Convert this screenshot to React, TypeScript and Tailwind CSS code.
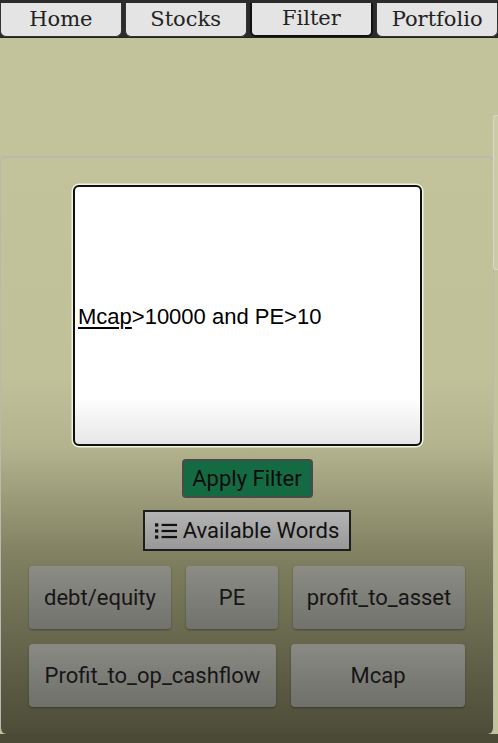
import React from 'react';

const tabs = ['Home', 'Stocks', 'Filter', 'Portfolio'];

const WordButton: React.FC<{ label: string; className: string }> = ({ label, className }) => (
  <button
    className={`h-[63px] rounded-[4px] bg-gradient-to-b from-[#8e8e8a]/90 to-[#737370]/90 shadow-[0_1px_2px_rgba(0,0,0,0.35)] text-[22px] text-[#161616] font-['Roboto',sans-serif] ${className}`}
  >
    {label}
  </button>
);

export default function App() {
  return (
    <div className="w-[498px] h-[743px] overflow-hidden relative bg-[#c2c39b] font-['Roboto',sans-serif]">
      {/* Tab bar */}
      <div className="h-[38px] bg-[#2b2b2b] pt-[3px] border-b border-[#222]">
        <div className="flex gap-[3px] h-[34px]">
          {tabs.map((t) => (
            <div
              key={t}
              className={`flex-1 flex items-center justify-center bg-[#e4e4e4] rounded-b-[6px] text-[21px] text-[#222] font-['DejaVu_Serif',serif] ${
                t === 'Filter' ? 'border-2 border-t-0 border-[#111]' : 'border border-t-0 border-[#333]'
              }`}
            >
              {t}
            </div>
          ))}
        </div>
      </div>

      {/* Scrollbar */}
      <div className="absolute right-0 top-[115px] w-[5px] h-[155px] rounded-l-[3px] border border-r-0 border-[#d8d8c4] bg-[#cacaa6]" />

      {/* Panel */}
      <div className="mt-[118px] mr-[4px] h-[578px] rounded-[6px] border-t-2 border-l border-r border-[#b9b9b0] bg-[linear-gradient(to_bottom,#c2c39b_0%,#c0c199_38%,#b3b38e_50%,#7e7e60_70%,#4c4c38_100%)] flex flex-col items-center pt-[27px]">
        <div className="w-[349px] ml-[1px] h-[261px] rounded-[6px] border-2 border-[#111] shadow-[0_0_0_1.5px_#f2f2e0] bg-[linear-gradient(to_bottom,#ffffff_0%,#ffffff_82%,#e6e6e6_100%)] flex items-center px-[3px]">
          <span className="text-[22px] text-black font-['Liberation_Sans',sans-serif] mt-[1px]">
            <span className="underline decoration-2 underline-offset-[3px]">Mcap</span>&gt;10000 and PE&gt;10
          </span>
        </div>

        <button className="mt-[13px] w-[131px] h-[39px] rounded-[4px] border-2 border-[#4a4a4a] bg-[#146b43] text-[22px] text-[#0c0c0c]">
          Apply Filter
        </button>

        <button className="mt-[12px] w-[208px] h-[41px] border-2 border-[#1e1e1e] bg-gradient-to-b from-[#b4b4b4] to-[#989898] flex items-center justify-center gap-[6px] text-[22px] text-[#111]">
          <svg width="22" height="18" viewBox="0 0 20 16">
            <rect x="0" y="1" width="3" height="3" fill="#111" />
            <rect x="0" y="6.5" width="3" height="3" fill="#111" />
            <rect x="0" y="12" width="3" height="3" fill="#111" />
            <rect x="6" y="1.5" width="14" height="2" fill="#111" />
            <rect x="6" y="7" width="14" height="2" fill="#111" />
            <rect x="6" y="12.5" width="14" height="2" fill="#111" />
          </svg>
          Available Words
        </button>

        <div className="w-full px-[28px] mt-[15px] flex flex-col gap-[15px]">
          <div className="flex gap-[15px]">
            <WordButton label="debt/equity" className="w-[142px]" />
            <WordButton label="PE" className="w-[92px]" />
            <WordButton label="profit_to_asset" className="flex-1" />
          </div>
          <div className="flex gap-[15px]">
            <WordButton label="Profit_to_op_cashflow" className="w-[247px]" />
            <WordButton label="Mcap" className="flex-1" />
          </div>
        </div>
      </div>
      <div className="h-[9px] bg-[#4a4a37]" />
    </div>
  );
}
